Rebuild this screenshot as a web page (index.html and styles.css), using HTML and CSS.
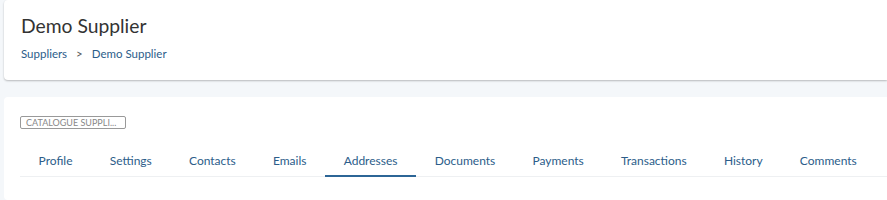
FILE: index.html
```html
<!DOCTYPE html>
<html>
<head>
<meta charset="utf-8">
<link rel="stylesheet" href="styles.css">
</head>
<body>
<div class="page">
  <div class="card header">
    <h1 class="title">Demo Supplier</h1>
    <div class="crumbs"><span class="crumb">Suppliers</span><span class="sep">&gt;</span><span class="crumb">Demo Supplier</span></div>
  </div>
  <div class="card body">
    <div class="tag">CATALOGUE SUPPLI...</div>
    <div class="tabs">
      <div class="tab">Profile</div>
      <div class="tab">Settings</div>
      <div class="tab">Contacts</div>
      <div class="tab">Emails</div>
      <div class="tab active">Addresses</div>
      <div class="tab">Documents</div>
      <div class="tab">Payments</div>
      <div class="tab">Transactions</div>
      <div class="tab">History</div>
      <div class="tab">Comments</div>
    </div>
  </div>
</div>
</body>
</html>
```
FILE: styles.css
```css
html, body { margin: 0; padding: 0; }
body {
  background: #f4f7fa;
  font-family: Lato, "Open Sans", sans-serif;
  width: 887px;
  height: 200px;
  overflow: hidden;
}
.page {
  padding-left: 4px;
  display: flex;
  flex-direction: column;
  gap: 17px;
}
.card {
  background: #fff;
  border-radius: 4px 0 0 4px;
}
.header {
  height: 80px;
  box-sizing: border-box;
  padding: 14px 0 0 17px;
  box-shadow: 0 1px 2px rgba(0,0,0,0.25);
}
.title {
  margin: 0;
  font-weight: 400;
  font-size: 19.3px;
  line-height: 24px;
  color: #333;
}
.crumbs {
  margin-top: 9px;
  font-size: 11.5px;
  color: #2c5d8a;
  display: flex;
  gap: 9px;
}
.sep { color: #555; }
.body {
  height: 103px;
  box-sizing: border-box;
  padding: 16px 0 0 16px;
}
.tag {
  display: inline-block;
  border: 1px solid #999;
  border-radius: 2px;
  font-size: 9px;
  line-height: 11px;
  color: #888;
  padding: 0 5px;
  width: 94px;
  white-space: nowrap;
  overflow: hidden;
}
.tabs {
  margin-top: 16px;
  display: flex;
  border-bottom: 1px solid #eef0f2;
}
.tab {
  font-size: 12px;
  line-height: 16px;
  color: #2c5d8a;
  padding: 5px 18.6px 6px;
  margin-bottom: -1px;
  border-bottom: 2px solid transparent;
}
.tab.active {
  border-bottom-color: #2c6596;
}
```
